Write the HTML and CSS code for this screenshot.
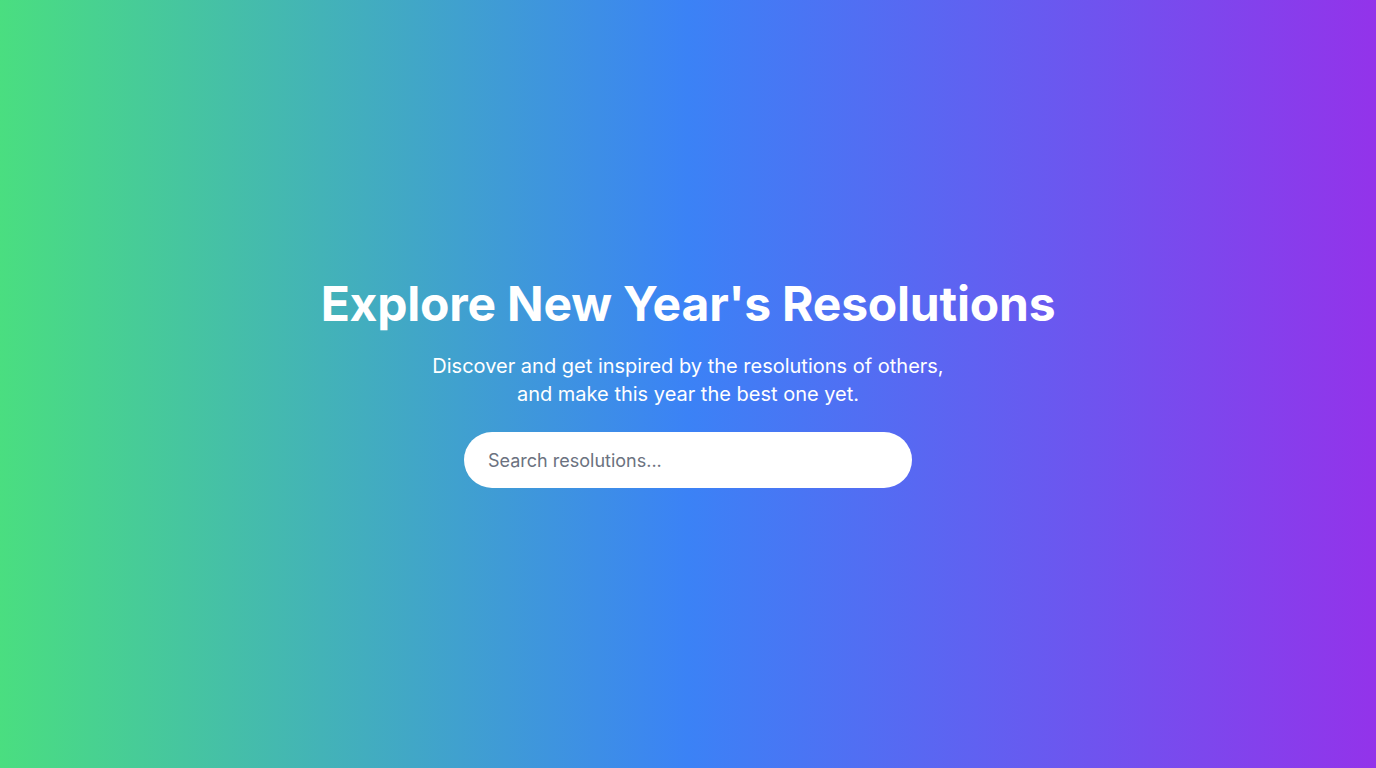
FILE: index.html
```html
<!DOCTYPE html>
<html lang="en">
<head>
<meta charset="utf-8">
<title>Explore New Year's Resolutions</title>
<link rel="stylesheet" href="styles.css">
</head>
<body>
<main class="hero">
  <h1 class="hero-title">Explore New Year's Resolutions</h1>
  <p class="hero-sub">Discover and get inspired by the resolutions of others, and make this year the best one yet.</p>
  <input class="search" type="text" placeholder="Search resolutions...">
</main>
</body>
</html>
```
FILE: styles.css
```css
* { box-sizing: border-box; }
html, body { margin: 0; height: 100%; }
body {
  font-family: Inter, "Noto Sans", sans-serif;
  background: linear-gradient(to right, #4ade80, #3b82f6, #9333ea);
  color: #fff;
}
.hero {
  height: 100vh;
  display: flex;
  flex-direction: column;
  align-items: center;
  justify-content: center;
  text-align: center;
  padding: 0 16px;
}
.hero-title {
  margin: 0 0 24px;
  font-size: 48px;
  line-height: 48px;
  font-weight: 700;
  letter-spacing: -0.2px;
}
.hero-sub {
  margin: 0 0 24px;
  max-width: 520px;
  font-size: 20px;
  line-height: 28px;
}
.search {
  width: 448px;
  height: 56px;
  border: none;
  border-radius: 9999px;
  padding: 0 24px;
  font-family: inherit;
  font-size: 18px;
  color: #1f2937;
  background: #fff;
  outline: none;
}
.search::placeholder { color: #6b7280; }
```
